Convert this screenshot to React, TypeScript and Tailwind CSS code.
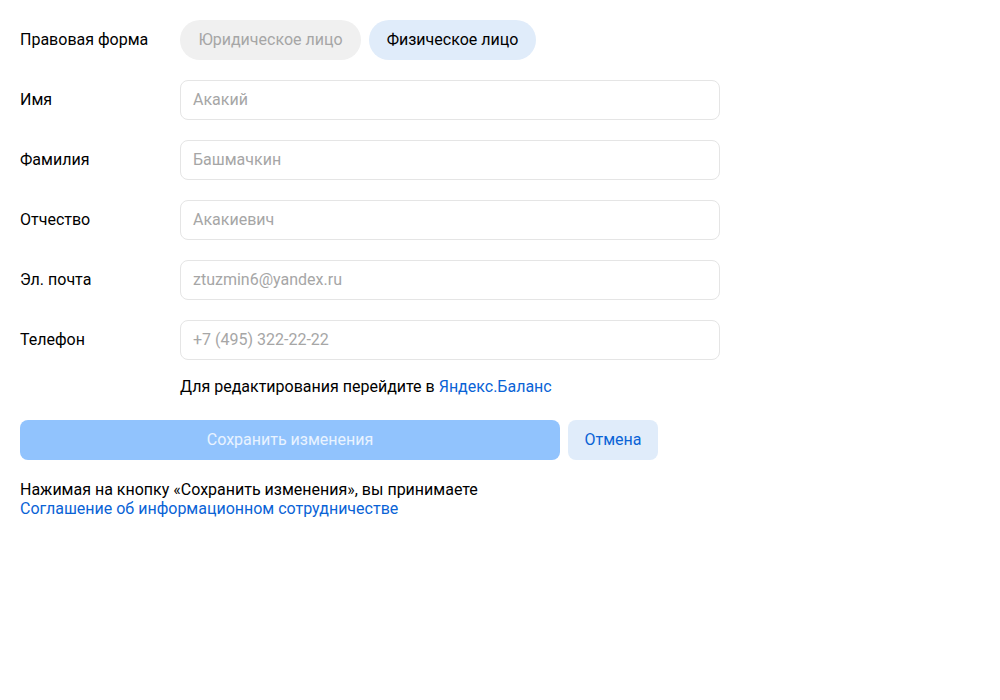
export default function App() {
  const fields = [
    { label: "Имя", value: "Акакий" },
    { label: "Фамилия", value: "Башмачкин" },
    { label: "Отчество", value: "Акакиевич" },
    { label: "Эл. почта", value: "ztuzmin6@yandex.ru" },
    { label: "Телефон", value: "+7 (495) 322-22-22" },
  ];

  return (
    <div className="min-h-[700px] bg-white p-5 text-[16px] text-black font-['Roboto',sans-serif]">
      <div className="flex items-center h-10">
        <div className="w-40 shrink-0">Правовая форма</div>
        <div className="flex gap-2">
          <button className="h-10 w-[181px] rounded-full bg-[#f0f0f0] text-[#a6a6a6]">Юридическое лицо</button>
          <button className="h-10 w-[167px] rounded-full bg-[#e0ecfa] text-black">Физическое лицо</button>
        </div>
      </div>

      {fields.map((f) => (
        <div key={f.label} className="flex items-center h-10 mt-5">
          <div className="w-40 shrink-0">{f.label}</div>
          <div className="w-[540px] h-10 flex items-center px-3 border border-[#e5e5e5] rounded-lg text-[#a6a6a6]">
            {f.value}
          </div>
        </div>
      ))}

      <div className="pl-40 mt-[17px] leading-5">
        Для редактирования перейдите в <a className="text-[#0a63d6]">Яндекс.Баланс</a>
      </div>

      <div className="flex gap-2 mt-[23px]">
        <button className="w-[540px] h-10 rounded-lg bg-[#91c3fd] text-white/80">Сохранить изменения</button>
        <button className="w-[90px] h-10 rounded-lg bg-[#e0ecfa] text-[#0a63d6]">Отмена</button>
      </div>

      <div className="mt-5 leading-[19px]">
        <div>Нажимая на кнопку «Сохранить изменения», вы принимаете</div>
        <a className="text-[#0a63d6]">Соглашение об информационном сотрудничестве</a>
      </div>
    </div>
  );
}
